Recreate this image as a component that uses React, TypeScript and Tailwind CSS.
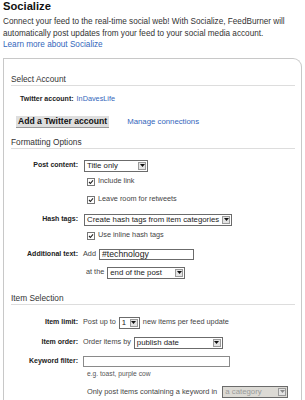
import React from "react"

const font = "font-['Liberation_Sans',Arial,sans-serif]"

function Select({ value, width, disabled = false }: { value: string; width: string; disabled?: boolean }) {
  return (
    <div
      className={`flex h-[12px] items-stretch border border-[#6b6b6b] ${width} ${
        disabled ? "bg-[#dcdad5] text-[#9a9a9a]" : "bg-white text-[#222]"
      }`}
    >
      <span className="flex-1 overflow-hidden whitespace-nowrap pl-[2px] text-[7.8px] leading-[10px]">{value}</span>
      <span className="m-[1px] flex w-[8px] shrink-0 items-center justify-center border border-[#9a9a9a] bg-[#e4e4e4]">
        <svg width="5" height="3" viewBox="0 0 5 3">
          <path d="M0 0h5L2.5 3z" fill={disabled ? "#888" : "#111"} />
        </svg>
      </span>
    </div>
  )
}

function Check({ label, className = "" }: { label: string; className?: string }) {
  return (
    <div className={`flex h-[10px] items-center pl-[83px] ${className}`}>
      <svg width="8" height="8" viewBox="0 0 8 8" className="mr-[3px]">
        <rect x="0.5" y="0.5" width="7" height="7" fill="#fff" stroke="#777" />
        <path d="M2 4l1.4 1.5L6 2.3" stroke="#222" strokeWidth="1.1" fill="none" />
      </svg>
      <span className="text-[7.3px] text-[#444]">{label}</span>
    </div>
  )
}

function Row({ label, children, className = "" }: { label: string; children: React.ReactNode; className?: string }) {
  return (
    <div className={`flex items-center ${className}`}>
      <span className="w-[74px] shrink-0 text-right text-[7px] font-bold text-[#222]">{label}</span>
      <div className="ml-[5px] flex items-center gap-[3px] text-[7.3px] text-[#444]">{children}</div>
    </div>
  )
}

function Header({ title, className = "" }: { title: string; className?: string }) {
  return (
    <div className={`ml-[7px] mr-[6px] border-b border-[#ddd] pb-[1px] text-[8.3px] leading-[10px] text-[#333] ${className}`}>
      {title}
    </div>
  )
}

export default function App() {
  return (
    <div className={`h-[400px] w-[305px] overflow-hidden bg-white ${font}`}>
      <h1 className="pl-[3px] text-[11.2px] font-bold leading-[12px] text-[#111]">Socialize</h1>
      <p className="mt-[4px] pl-[3px] pr-[4px] text-[8.2px] leading-[11.5px] text-[#333]">
        Connect your feed to the real-time social web! With Socialize, FeedBurner will automatically post updates from
        your feed to your social media account.
        <br />
        <span className="text-[#3366bb]">Learn more about Socialize</span>
      </p>

      <div className="ml-[3px] mr-[3px] mt-[7px] h-[400px] rounded-tr-[9px] border-l border-r border-t border-[#c8c8c8]">
        <Header title="Select Account" className="mt-[15px]" />
        <div className="mt-[9px] flex h-[10px] items-center pl-[16px] text-[7px]">
          <span className="font-bold text-[#222]">Twitter account:</span>
          <span className="ml-[3px] text-[7.3px] text-[#3366bb]">InDavesLife</span>
        </div>
        <div className="mt-[11px] flex items-center pl-[12px]">
          <button className="h-[12px] border-b border-[#999] bg-[#dedede] px-[2px] text-[8.6px] font-bold leading-[11px] text-[#111]">
            Add a Twitter account
          </button>
          <span className="ml-[18px] text-[7.8px] text-[#3366bb]">Manage connections</span>
        </div>

        <Header title="Formatting Options" className="mt-[9px]" />
        <Row label="Post content:" className="mt-[11px]">
          <div className="ml-[1px]">
            <Select value="Title only" width="w-[64px]" />
          </div>
        </Row>
        <Check label="Include link" className="mt-[5px]" />
        <Check label="Leave room for retweets" className="mt-[8px]" />
        <Row label="Hash tags:" className="mt-[9px]">
          <div className="ml-[1px]">
            <Select value="Create hash tags from item categories" width="w-[148px]" />
          </div>
        </Row>
        <Check label="Use inline hash tags" className="mt-[5px]" />
        <Row label="Additional text:" className="mt-[8px]">
          <span>Add</span>
          <div className="h-[11px] w-[95px] border border-[#6b6b6b] bg-white pl-[2px] text-[8.7px] leading-[9px] text-[#222]">
            #technology
          </div>
        </Row>
        <div className="mt-[7px] flex items-center gap-[3px] pl-[82px] text-[7.3px] text-[#444]">
          <span>at the</span>
          <Select value="end of the post" width="w-[78px]" />
        </div>

        <Header title="Item Selection" className="mt-[14px]" />
        <Row label="Item limit:" className="mt-[12px]">
          <span>Post up to</span>
          <Select value="1" width="w-[21px]" />
          <span>new items per feed update</span>
        </Row>
        <Row label="Item order:" className="mt-[8px]">
          <span>Order items by</span>
          <Select value="publish date" width="w-[89px]" />
        </Row>
        <Row label="Keyword filter:" className="mt-[7px]">
          <div className="h-[11px] w-[147px] border border-[#8a8a8a] bg-white" />
        </Row>
        <div className="mt-[3px] pl-[83px] text-[6.7px] leading-[8px] text-[#555]">e.g. toast, purple cow</div>
        <div className="mt-[8px] flex items-center gap-[5px] pl-[83px] text-[7.4px] text-[#444]">
          <span>Only post items containing a keyword in</span>
          <Select value="a category" width="w-[66px]" disabled />
        </div>
      </div>
    </div>
  )
}
